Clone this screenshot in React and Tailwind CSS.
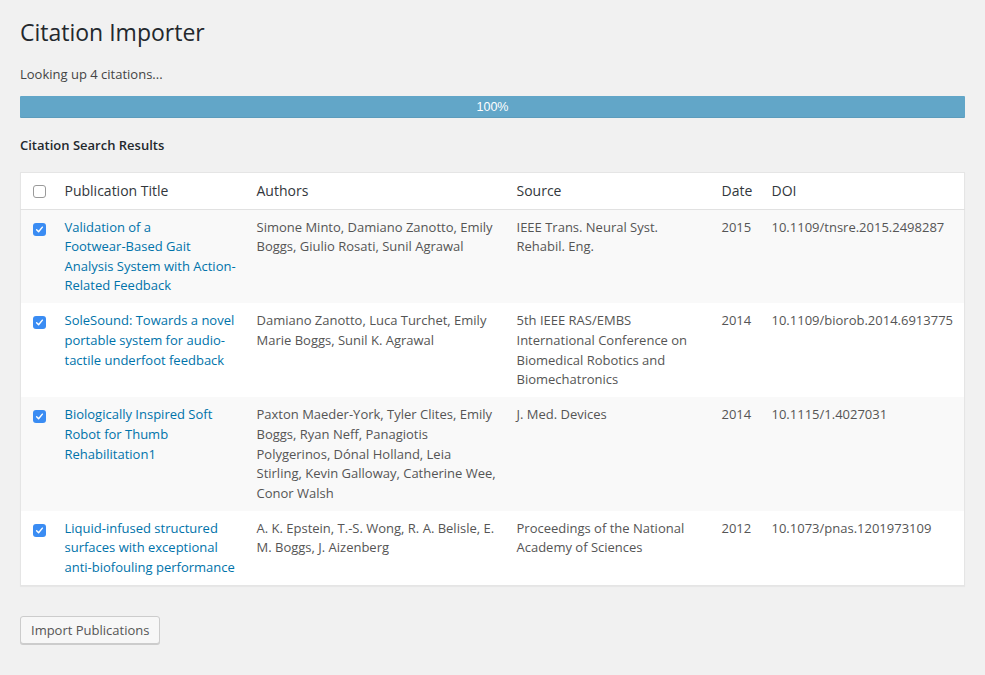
import React from "react";

const rows = [
  {
    title: "Validation of a Footwear-\u2060Based Gait Analysis System with Action-Related Feedback",
    authors: "Simone Minto, Damiano Zanotto, Emily Boggs, Giulio Rosati, Sunil Agrawal",
    source: "IEEE Trans. Neural Syst. Rehabil. Eng.",
    date: "2015",
    doi: "10.1109/tnsre.2015.2498287",
  },
  {
    title: "SoleSound: Towards a novel portable system for audio-tactile underfoot feedback",
    authors: "Damiano Zanotto, Luca Turchet, Emily Marie Boggs, Sunil K. Agrawal",
    source: "5th IEEE RAS/EMBS International Conference on Biomedical Robotics and Biomechatronics",
    date: "2014",
    doi: "10.1109/biorob.2014.6913775",
  },
  {
    title: "Biologically Inspired Soft Robot for Thumb Rehabilitation1",
    authors:
      "Paxton Maeder-York, Tyler Clites, Emily Boggs, Ryan Neff, Panagiotis Polygerinos, Dónal Holland, Leia Stirling, Kevin Galloway, Catherine Wee, Conor Walsh",
    source: "J. Med. Devices",
    date: "2014",
    doi: "10.1115/1.4027031",
  },
  {
    title: "Liquid-infused structured surfaces with exceptional anti-biofouling performance",
    authors: "A. K. Epstein, T.-S. Wong, R. A. Belisle, E. M. Boggs, J. Aizenberg",
    source: "Proceedings of the National Academy of Sciences",
    date: "2012",
    doi: "10.1073/pnas.1201973109",
  },
];

function Check({ checked }) {
  if (checked) {
    return (
      <span className="flex h-[13px] w-[13px] items-center justify-center rounded-[3px] bg-[#3a8cf3]">
        <svg width="9" height="9" viewBox="0 0 10 10" fill="none">
          <path d="M1.8 5.3 L4 7.5 L8.2 2.4" stroke="white" strokeWidth="1.6" strokeLinecap="round" strokeLinejoin="round" />
        </svg>
      </span>
    );
  }
  return <span className="block h-[13px] w-[13px] rounded-[3px] border border-[#9a9a9a] bg-white" />;
}

export default function App() {
  return (
    <div
      className="min-h-[675px] bg-[#f1f1f1] px-5 pt-[18px] text-[13px] text-[#444]"
      style={{ fontFamily: '"Open Sans", "Noto Sans", sans-serif' }}
    >
      <h1 className="text-[23px] leading-[29px] font-normal text-[#23282d]">Citation Importer</h1>
      <p className="mt-[18px] leading-[18px] text-[13px] text-[#444]">Looking up 4 citations...</p>
      <div className="mt-[13px] flex h-[22px] items-center justify-center rounded-[1px] bg-[#62a6c8] shadow-[inset_0_-1px_0_rgba(0,0,0,0.06)]">
        <span
          className="text-[12.5px] text-white"
          style={{ fontFamily: '"Liberation Sans", Arial, sans-serif' }}
        >
          100%
        </span>
      </div>
      <h2 className="mt-[18px] text-[13px] leading-[18px] font-semibold text-[#23282d]">Citation Search Results</h2>
      <table className="mt-[18px] w-full table-fixed border-collapse border border-[#e5e5e5] bg-white shadow-[0_1px_1px_rgba(0,0,0,0.04)]">
        <colgroup>
          <col className="w-[34px]" />
          <col className="w-[192px]" />
          <col className="w-[260px]" />
          <col className="w-[205px]" />
          <col className="w-[50px]" />
          <col />
        </colgroup>
        <thead>
          <tr className="border-b border-[#e1e1e1]">
            <th className="pt-[12px] pl-[12px] align-top">
              <Check checked={false} />
            </th>
            {["Publication Title", "Authors", "Source", "Date", "DOI"].map((h) => (
              <th key={h} className="px-[10px] pt-[8px] pb-[8px] text-left text-[14px] leading-[19.6px] font-normal text-[#32373c]">
                {h}
              </th>
            ))}
          </tr>
        </thead>
        <tbody>
          {rows.map((r, i) => (
            <tr key={i} className={i % 2 === 0 ? "bg-[#f9f9f9]" : "bg-white"}>
              <td className="pt-[13px] pl-[12px] align-top">
                <Check checked />
              </td>
              <td className="px-[10px] pt-[8px] pb-[7.5px] align-top text-[13px] leading-[19.6px] text-[#0073aa]">{r.title}</td>
              <td className="px-[10px] pt-[8px] pb-[7.5px] align-top text-[13px] leading-[19.6px] text-[#555]">{r.authors}</td>
              <td className="px-[10px] pt-[8px] pb-[7.5px] align-top text-[13px] leading-[19.6px] text-[#555]">{r.source}</td>
              <td className="px-[10px] pt-[8px] pb-[7.5px] align-top text-[13px] leading-[19.6px] text-[#555]">{r.date}</td>
              <td className="px-[10px] pt-[8px] pb-[7.5px] align-top text-[13px] leading-[19.6px] text-[#555]">{r.doi}</td>
            </tr>
          ))}
        </tbody>
      </table>
      <button className="mt-[30px] h-[28px] rounded-[3px] border border-[#ccc] bg-[#f7f7f7] px-[10px] text-[13px] leading-[26px] text-[#555] shadow-[0_1px_0_#ccc]">
        Import Publications
      </button>
    </div>
  );
}
